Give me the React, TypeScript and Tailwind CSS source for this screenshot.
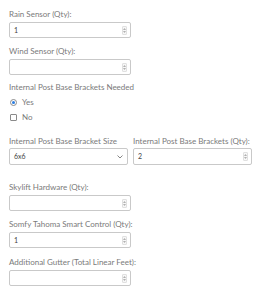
import React from "react";

const font = { fontFamily: 'Lato, "Open Sans", sans-serif' };

function Spin() {
  return (
    <div className="flex flex-col items-center justify-center gap-[1px] w-[5px] h-[9px] border border-[#e0e0e0] rounded-[1px] bg-[#f7f7f7]">
      <svg width="3" height="2" viewBox="0 0 3 2"><path d="M0 2 L1.5 0 L3 2 Z" fill="#b0b0b0" /></svg>
      <svg width="3" height="2" viewBox="0 0 3 2"><path d="M0 0 L1.5 2 L3 0 Z" fill="#b0b0b0" /></svg>
    </div>
  );
}

function NumInput({ value }: { value?: string }) {
  return (
    <div className="w-[122px] h-[16px] border border-[#c9c9c9] rounded-[2px] bg-white flex items-center pl-[4px] pr-[3px]">
      <span className="flex-1 text-[7px] text-[#444]">{value}</span>
      <Spin />
    </div>
  );
}

function Label({ children }: { children: React.ReactNode }) {
  return <div className="text-[8px] leading-[10px] text-[#7a7a7a] whitespace-nowrap">{children}</div>;
}

export default function App() {
  return (
    <div className="w-[264px] h-[300px] bg-white pl-[9px] pt-[9px]" style={font}>
      <div className="flex flex-col gap-[3px]">
        <Label>Rain Sensor (Qty):</Label>
        <NumInput value="1" />
      </div>
      <div className="flex flex-col gap-[3px] mt-[8px]">
        <Label>Wind Sensor (Qty):</Label>
        <NumInput />
      </div>
      <div className="mt-[7px]">
        <Label>Internal Post Base Brackets Needed</Label>
        <div className="flex items-center gap-[5px] mt-[3px] h-[14px] pl-[1px]">
          <div className="w-[7px] h-[7px] rounded-full border border-[#8a8a8a] flex items-center justify-center">
            <div className="w-[3px] h-[3px] rounded-full bg-[#2b7de1]" />
          </div>
          <span className="text-[8px] text-[#7a7a7a]">Yes</span>
        </div>
        <div className="flex items-center gap-[5px] mt-[1px] h-[14px] pl-[1px]">
          <div className="w-[7px] h-[7px] rounded-[1px] border border-[#8a8a8a]" />
          <span className="text-[8px] text-[#7a7a7a]">No</span>
        </div>
      </div>
      <div className="flex gap-[5px] mt-[12px]">
        <div className="flex flex-col gap-[2px] w-[119px]">
          <Label>Internal Post Base Bracket Size</Label>
          <div className="w-[119px] h-[17px] border border-[#c9c9c9] rounded-[2px] bg-white flex items-center pl-[4px] pr-[4px]">
            <span className="flex-1 text-[7px] text-[#444]">6x6</span>
            <svg width="6" height="4" viewBox="0 0 6 4"><path d="M0.5 0.5 L3 3 L5.5 0.5" fill="none" stroke="#777" strokeWidth="0.9" /></svg>
          </div>
        </div>
        <div className="flex flex-col gap-[2px] w-[119px]">
          <Label>Internal Post Base Brackets (Qty):</Label>
          <div className="h-[17px] border border-[#c9c9c9] rounded-[2px] bg-white flex items-center pl-[4px] pr-[3px]">
            <span className="flex-1 text-[7px] text-[#444]">2</span>
            <Spin />
          </div>
        </div>
      </div>
      <div className="flex flex-col gap-[3px] mt-[17px]">
        <Label>Skylift Hardware (Qty):</Label>
        <NumInput />
      </div>
      <div className="flex flex-col gap-[3px] mt-[8px]">
        <Label>Somfy Tahoma Smart Control (Qty):</Label>
        <NumInput value="1" />
      </div>
      <div className="flex flex-col gap-[3px] mt-[9px]">
        <Label>Additional Gutter (Total Linear Feet):</Label>
        <NumInput />
      </div>
    </div>
  );
}
